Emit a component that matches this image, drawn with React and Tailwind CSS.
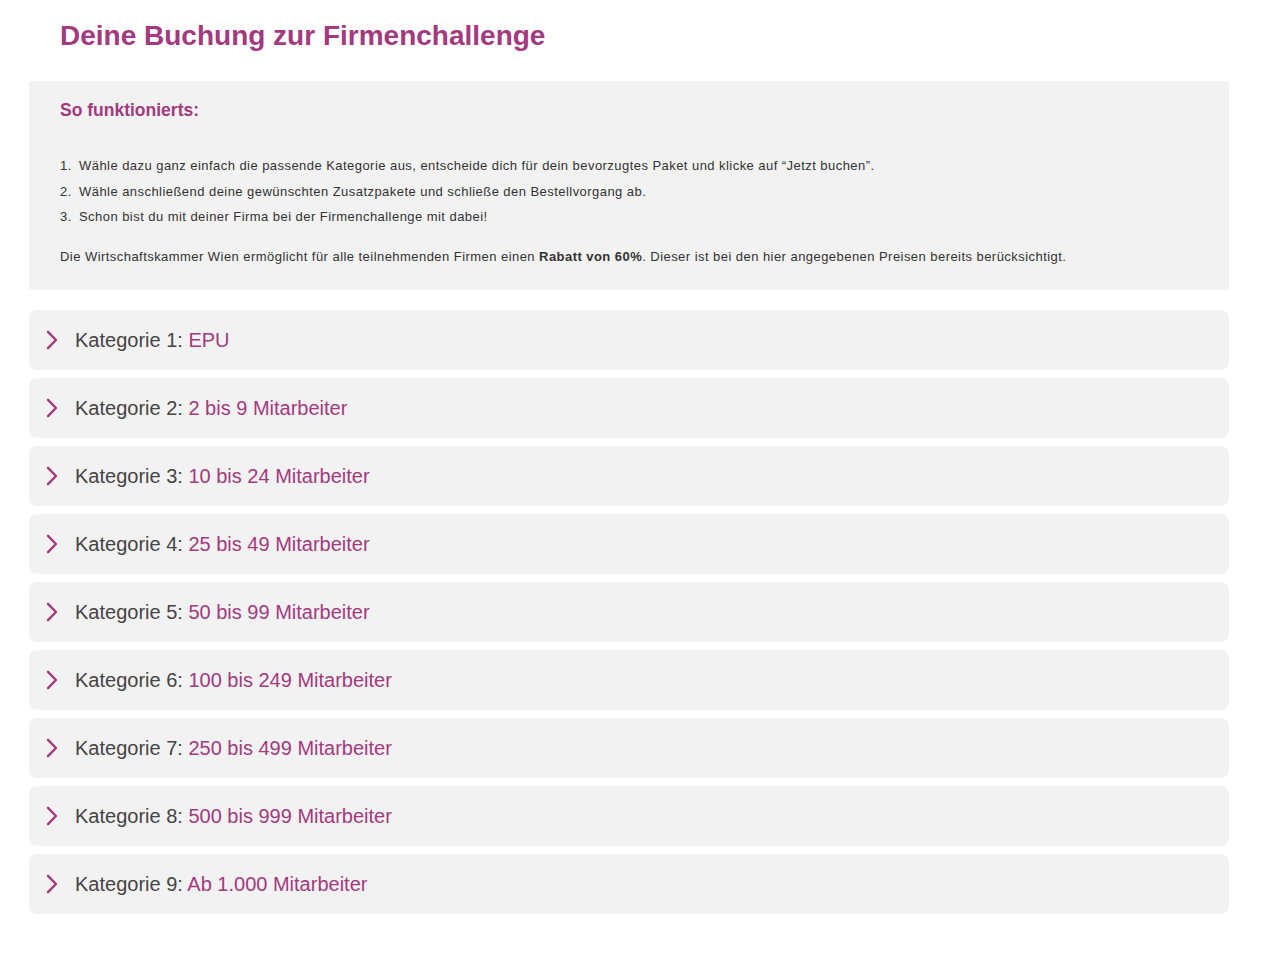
import React from "react";

const kategorien = [
  { nr: 1, label: "EPU" },
  { nr: 2, label: "2 bis 9 Mitarbeiter" },
  { nr: 3, label: "10 bis 24 Mitarbeiter" },
  { nr: 4, label: "25 bis 49 Mitarbeiter" },
  { nr: 5, label: "50 bis 99 Mitarbeiter" },
  { nr: 6, label: "100 bis 249 Mitarbeiter" },
  { nr: 7, label: "250 bis 499 Mitarbeiter" },
  { nr: 8, label: "500 bis 999 Mitarbeiter" },
  { nr: 9, label: "Ab 1.000 Mitarbeiter" },
];

const schritte = [
  "Wähle dazu ganz einfach die passende Kategorie aus, entscheide dich für dein bevorzugtes Paket und klicke auf “Jetzt buchen”.",
  "Wähle anschließend deine gewünschten Zusatzpakete und schließe den Bestellvorgang ab.",
  "Schon bist du mit deiner Firma bei der Firmenchallenge mit dabei!",
];

const Chevron = () => (
  <svg width="12" height="20" viewBox="0 0 12 20" fill="none" className="shrink-0">
    <path d="M2 1.8 L10 10 L2 18.2" stroke="#a3397f" strokeWidth="2.4" strokeLinecap="round" strokeLinejoin="round" />
  </svg>
);

const KategorieItem = ({ nr, label }) => (
  <button className="flex h-[60px] w-full items-center gap-[17px] rounded-lg bg-[#f2f2f2] pl-[17px] text-left">
    <Chevron />
    <span className="text-[20px] text-[#444]">
      Kategorie {nr}: <span className="text-[#a3397f]">{label}</span>
    </span>
  </button>
);

export default function App() {
  return (
    <div className="min-h-screen bg-white pb-10 font-['Liberation_Sans',Arial,sans-serif]">
      <h1 className="pl-[60px] pt-[18px] text-[28px] font-bold leading-[36px] text-[#a3397f]">
        Deine Buchung zur Firmenchallenge
      </h1>

      <div className="ml-[29px] mt-[27px] w-[1200px]">
        <div className="bg-[#f2f2f2] px-[31px] pb-[23px] pt-[17px]">
          <h2 className="text-[17.5px] font-bold leading-[24px] text-[#a3397f]">So funktionierts:</h2>
          <ol className="mt-[31px] flex flex-col text-[13px] leading-[25.5px] tracking-[0.45px] text-[#333]">
            {schritte.map((s, i) => (
              <li key={i} className="flex">
                <span className="w-[19px] shrink-0">{i + 1}.</span>
                <span>{s}</span>
              </li>
            ))}
          </ol>
          <p className="mt-[17px] text-[13px] leading-[20px] tracking-[0.45px] text-[#333]">
            Die Wirtschaftskammer Wien ermöglicht für alle teilnehmenden Firmen einen{" "}
            <strong>Rabatt von 60%</strong>. Dieser ist bei den hier angegebenen Preisen bereits berücksichtigt.
          </p>
        </div>

        <div className="mt-[20px] flex flex-col gap-2">
          {kategorien.map((k) => (
            <KategorieItem key={k.nr} nr={k.nr} label={k.label} />
          ))}
        </div>
      </div>
    </div>
  );
}
